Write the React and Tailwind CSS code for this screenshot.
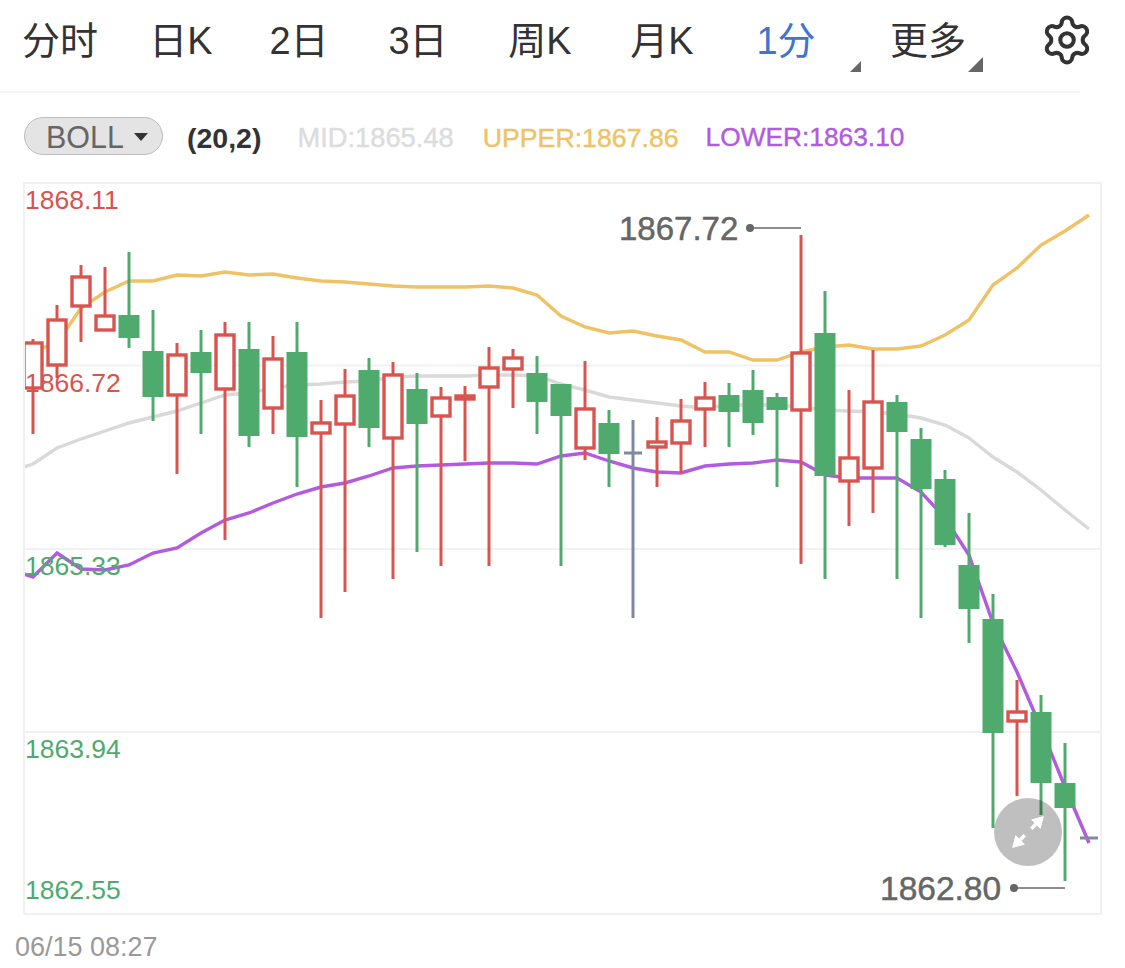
import { Settings } from 'lucide-react';

const tabs = [
  { name: '分时', w: 'w-[120px]' },
  { name: '日K', w: 'w-[122px]' },
  { name: '2日', w: 'w-[114px]' },
  { name: '3日', w: 'w-[124px]' },
  { name: '周K', w: 'w-[120px]' },
  { name: '月K', w: 'w-[124px]' },
  { name: '1分', w: 'w-[124px]', active: true, corner: 'right-[-13px] top-[44px] w-[11px] h-[11px]' },
  { name: '更多', w: 'w-[160px]', corner: 'right-[25px] top-[40px] w-[15px] h-[15px]' },
];

const axisLabels = [
  { text: '1868.11', color: 'text-[#d9534f]' },
  { text: '1866.72', color: 'text-[#d9534f]' },
  { text: '1865.33', color: 'text-[#4eaa6d]' },
  { text: '1863.94', color: 'text-[#4eaa6d]' },
];

// x center, box top + bottom, wick top + bottom, kind
const candles = [
  [33, 343, 388, 339, 434, 'r'], [57, 320, 365, 305, 378, 'r'], [81, 277, 306, 265, 342, 'r'],
  [105, 316, 330, 267, 316, 'r'], [129, 315, 338, 252, 348, 'g'], [153, 351, 397, 310, 421, 'g'],
  [177, 355, 395, 343, 474, 'r'], [201, 352, 373, 330, 434, 'g'], [225, 335, 389, 322, 540, 'r'],
  [249, 349, 436, 322, 447, 'g'], [273, 359, 408, 336, 434, 'r'], [297, 352, 437, 322, 487, 'g'],
  [321, 423, 433, 400, 618, 'r'], [345, 396, 424, 369, 592, 'r'], [369, 370, 428, 358, 447, 'g'],
  [393, 375, 438, 362, 579, 'r'], [417, 389, 424, 373, 552, 'g'], [441, 398, 416, 387, 566, 'r'],
  [465, 396, 399, 386, 461, 'r'], [489, 368, 387, 347, 566, 'r'], [513, 358, 369, 349, 408, 'r'],
  [537, 373, 402, 356, 434, 'g'], [561, 384, 416, 384, 566, 'g'], [585, 409, 448, 361, 460, 'r'],
  [609, 423, 454, 410, 487, 'g'], [657, 442, 447, 417, 487, 'r'], [681, 421, 443, 399, 473, 'r'],
  [705, 398, 409, 382, 447, 'r'], [729, 395, 412, 383, 447, 'g'], [753, 390, 423, 370, 435, 'g'],
  [777, 397, 410, 393, 487, 'g'], [801, 353, 410, 235, 564, 'r'], [825, 333, 476, 291, 579, 'g'],
  [849, 458, 481, 390, 526, 'r'], [873, 402, 468, 350, 513, 'r'], [897, 402, 432, 395, 579, 'g'],
  [921, 439, 489, 428, 618, 'g'], [945, 479, 545, 470, 547, 'g'], [969, 565, 609, 513, 643, 'g'],
  [993, 619, 733, 594, 828, 'g'], [1017, 712, 721, 680, 796, 'r'], [1041, 712, 783, 695, 815, 'g'],
  [1065, 783, 808, 743, 881, 'g'],
];

const upper = '24,358 33,351 57,343 81,308 105,292 129,281 153,281 177,275 201,276 225,272 249,275 273,274 297,278 321,281 345,282 369,284 393,286 417,287 441,287 465,287 489,286 513,288 537,295 561,316 585,327 609,333 633,331 657,336 681,340 705,352 729,352 753,360 777,360 801,352 825,347 849,345 873,349 897,349 921,346 945,335 969,320 993,285 1017,268 1041,245 1065,231 1089,215';
const mid = '24,467 33,464 57,448 81,439 105,431 129,423 153,417 177,411 201,403 225,395 249,393 273,388 297,385 321,384 345,382 369,381 393,377 417,376 441,376 465,376 489,375 513,375 537,376 561,384 585,390 609,397 633,400 657,403 681,406 705,408 729,405 753,405 777,405 801,407 825,410 849,411 873,412 897,414 921,418 945,425 969,438 993,457 1017,472 1041,490 1065,510 1089,529';
const lower = '24,574 33,577 57,553 81,569 105,570 129,565 153,553 177,548 201,533 225,520 249,513 273,503 297,494 321,487 345,483 369,476 393,468 417,466 441,465 465,464 489,463 513,463 537,464 561,456 585,453 609,461 633,468 657,472 681,473 705,466 729,464 753,463 777,460 801,462 825,475 849,478 873,478 897,478 921,492 945,518 969,555 993,623 1017,672 1041,728 1065,787 1089,843';

const RED = '#d9534f';
const GREEN = '#4eaa6d';
const GRAY = '#8087a3';

function Candle({ x, top, bottom, high, low, kind }) {
  const color = kind === 'r' ? RED : GREEN;
  if (kind === 'r') {
    return (
      <g>
        <line x1={x} x2={x} y1={high} y2={top} stroke={color} strokeWidth="3" />
        <line x1={x} x2={x} y1={bottom} y2={low} stroke={color} strokeWidth="3" />
        <rect x={x - 9} y={top} width="18" height={bottom - top} fill="#fff" stroke={color} strokeWidth="3.4" />
      </g>
    );
  }
  return (
    <g>
      <line x1={x} x2={x} y1={high} y2={low} stroke={color} strokeWidth="3" />
      <rect x={x - 10.5} y={top} width="21" height={bottom - top} fill={color} />
    </g>
  );
}

function PriceChart() {
  return (
    <svg className="block" width="1075" height="729" viewBox="25 184 1075 729">
      <line x1="24" x2="1101" y1="365.5" y2="365.5" stroke="#f1f1f1" strokeWidth="2" />
      <line x1="24" x2="1101" y1="549" y2="549" stroke="#f1f1f1" strokeWidth="2" />
      <line x1="24" x2="1101" y1="732" y2="732" stroke="#f1f1f1" strokeWidth="2" />
      <polyline points={mid} fill="none" stroke="#d9d9d9" strokeWidth="3.4" />
      <polyline points={upper} fill="none" stroke="#eec265" strokeWidth="3.4" />
      <polyline points={lower} fill="none" stroke="#b25be0" strokeWidth="3.4" />
      {candles.map(([x, top, bottom, high, low, kind]) => (
        <Candle key={x} x={x} top={top} bottom={bottom} high={high} low={low} kind={kind} />
      ))}
      <line x1="633" x2="633" y1="420" y2="618" stroke={GRAY} strokeWidth="3" />
      <line x1="624" x2="642" y1="453" y2="453" stroke={GRAY} strokeWidth="3" />
      <line x1="1080" x2="1098" y1="838" y2="838" stroke={GRAY} strokeWidth="3" />
      {/* high / low markers */}
      <circle cx="750" cy="228" r="4" fill="#666" />
      <line x1="750" x2="801" y1="228" y2="228" stroke="#666" strokeWidth="1.5" />
      <circle cx="1014" cy="888" r="4" fill="#666" />
      <line x1="1014" x2="1065" y1="888" y2="888" stroke="#666" strokeWidth="1.5" />
    </svg>
  );
}

export default function App() {
  return (
    <div
      className="w-[1125px] h-[968px] overflow-hidden bg-white"
      style={{ fontFamily: '"Liberation Sans", "Noto Sans CJK SC", sans-serif' }}
    >
      {/* Tabs */}
      <div className="w-[1080px] h-[93px] border-b-2 border-[#f3f3f3] flex items-start pt-[17px]">
        {tabs.map((tab) => (
          <div
            key={tab.name}
            className={`relative shrink-0 ${tab.w} text-center text-[38px] leading-[48px] ${tab.active ? 'text-[#3f74cf]' : 'text-[#333]'}`}
          >
            {tab.name}
            {tab.corner && (
              <span className={`absolute ${tab.corner} bg-[#666] [clip-path:polygon(100%_0,100%_100%,0_100%)]`} />
            )}
          </div>
        ))}
        <Settings className="shrink-0 ml-[32px] mt-[-4px] w-[54px] h-[54px] text-[#333]" strokeWidth={1.8} />
      </div>

      {/* Indicator row */}
      <div className="flex items-center h-[38px] mt-[24px] pl-[24px] [-webkit-text-stroke:0.4px]">
        <div className="flex items-center justify-between w-[139px] h-[38px] pt-[4px] pl-[21px] pr-[14px] rounded-full border border-[#bdbdbd] bg-[#e4e4e4] text-[#666] text-[30.5px] [-webkit-text-stroke:0px]">
          BOLL
          <span className="mb-[3px] w-0 h-0 border-x-[7px] border-x-transparent border-t-[8px] border-t-[#333]" />
        </div>
        <span className="ml-[24px] pt-[4px] font-bold text-[#333] text-[28.5px] [-webkit-text-stroke:0px]">(20,2)</span>
        <span className="ml-[36px] pt-[4px] text-[#dcdcdc] text-[27.3px]">MID:1865.48</span>
        <span className="ml-[29px] pt-[4px] text-[#eec265] text-[26.7px]">UPPER:1867.86</span>
        <span className="ml-[27px] pt-[4px] text-[#b25be0] text-[26.3px]">LOWER:1863.10</span>
      </div>

      {/* Chart */}
      <div className="relative ml-[23px] mt-[27px] w-[1079px] h-[733px] border-2 border-[#f1f1f1]">
        <PriceChart />

        {/* Axis labels, painted over the plot */}
        <div className="absolute inset-0 flex flex-col justify-between pt-[1px] pb-[8px] text-[26.5px] leading-[30px]">
          <div className="flex flex-col gap-[153px]">
            {axisLabels.map((label) => (
              <span key={label.text} className={label.color}>{label.text}</span>
            ))}
          </div>
          <span className="text-[#4eaa6d]">1862.55</span>
        </div>

        {/* High / low tags */}
        <span className="absolute left-[594px] top-[27px] text-[33px] leading-[36px] text-[#666] [-webkit-text-stroke:0.5px]">1867.72</span>
        <span className="absolute left-[855px] top-[687px] text-[33.5px] leading-[36px] text-[#666] [-webkit-text-stroke:0.5px]">1862.80</span>

        {/* Fullscreen toggle */}
        <div className="absolute left-[969px] top-[614px] w-[68px] h-[68px] rounded-full bg-black/25 flex items-center justify-center">
          <svg width="36" height="36" viewBox="0 0 36 36" fill="#fff">
            <path d="M34 2 L30.5 15 L27 11.5 L22.5 16 L20 13.5 L24.5 9 L21 5.5 Z" />
            <path d="M2 34 L5.5 21 L9 24.5 L13.5 20 L16 22.5 L11.5 27 L15 30.5 Z" />
          </svg>
        </div>
      </div>

      <div className="ml-[15px] mt-[17px] text-[27px] leading-[30px] text-[#999]">06/15 08:27</div>
    </div>
  );
}
